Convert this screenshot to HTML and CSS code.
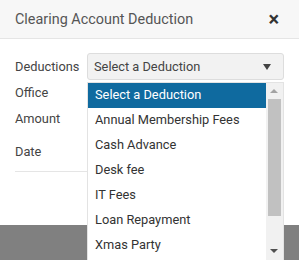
FILE: index.html
```html
<!DOCTYPE html>
<html lang="en">
<head>
    <meta charset="UTF-8">
    <title>Clearing Account Deduction</title>
    <link rel="stylesheet" href="styles.css">
</head>
<body>
<div class="modal">
    <div class="modal-header">
        <span class="modal-title">Clearing Account Deduction</span>
        <span class="close">&times;</span>
    </div>
    <div class="modal-body">
        <div class="row row-deduction">
            <label class="label">Deductions</label>
            <div class="select-wrap">
                <div class="select">
                    <span>Select a Deduction</span>
                    <span class="caret"></span>
                </div>
                <div class="dropdown">
                    <ul class="options">
                        <li class="active">Select a Deduction</li>
                        <li>Annual Membership Fees</li>
                        <li>Cash Advance</li>
                        <li>Desk fee</li>
                        <li>IT Fees</li>
                        <li>Loan Repayment</li>
                        <li>Xmas Party</li>
                    </ul>
                    <div class="scrollbar">
                        <span class="arrow-up"></span>
                        <span class="thumb"></span>
                        <span class="arrow-down"></span>
                    </div>
                </div>
            </div>
        </div>
        <div class="row row-office"><label class="label">Office</label></div>
        <div class="row row-amount"><label class="label">Amount</label></div>
        <div class="row row-date"><label class="label">Date</label></div>
        <hr class="divider">
    </div>
    <div class="modal-footer"></div>
</div>
</body>
</html>
```
FILE: styles.css
```css
body {
    margin: 0;
    font-family: Roboto, "Liberation Sans", sans-serif;
    background: #fff;
    color: #333;
}

.modal {
    width: 299px;
    height: 260px;
    overflow: hidden;
    position: relative;
}

.modal-header {
    height: 39px;
    background: #f7f7f7;
    border-bottom: 1px solid #e5e5e5;
    display: flex;
    align-items: center;
    justify-content: space-between;
    padding: 0 20px 0 15px;
    box-sizing: border-box;
}

.modal-title {
    font-size: 14.4px;
    color: #555;
}

.close {
    font-size: 20px;
    font-weight: bold;
    color: #333;
}

.modal-body {
    padding: 14px 15px 0 15px;
    height: 172px;
    box-sizing: border-box;
    font-size: 12.8px;
}

.row {
    display: flex;
    align-items: center;
}

.label {
    width: 72px;
    color: #444;
}

.row-deduction {
    height: 27px;
}

.row-office {
    height: 25px;
}

.row-amount {
    height: 26px;
}

.row-date {
    height: 40px;
}

.select-wrap {
    position: relative;
    flex: 1;
}

.select {
    height: 27px;
    box-sizing: border-box;
    background: #f2f2f2;
    border: 1px solid #ddd;
    border-radius: 3px;
    display: flex;
    align-items: center;
    justify-content: space-between;
    padding: 0 12px 0 6px;
    color: #444;
}

.caret {
    width: 0;
    height: 0;
    border-left: 4px solid transparent;
    border-right: 4px solid transparent;
    border-top: 6px solid #444;
}

.dropdown {
    position: absolute;
    top: 29px;
    left: 0;
    width: 197px;
    height: 200px;
    background: #fff;
    border: 1px solid #e3e3e3;
    box-sizing: border-box;
    display: flex;
    z-index: 2;
}

.options {
    list-style: none;
    margin: 0;
    padding: 0;
    flex: 1;
}

.options li {
    height: 25px;
    line-height: 24px;
    padding-left: 7px;
    color: #333;
}

.options li.active {
    background: #0f6a9f;
    color: #fff;
}

.scrollbar {
    width: 17px;
    background: #f1f1f1;
    position: relative;
}

.thumb {
    position: absolute;
    left: 2px;
    top: 16px;
    width: 13px;
    height: 117px;
    background: #c1c1c1;
}

.arrow-up {
    position: absolute;
    left: 4px;
    top: 6px;
    border-left: 4px solid transparent;
    border-right: 4px solid transparent;
    border-bottom: 4px solid #a3a3a3;
}

.arrow-down {
    position: absolute;
    left: 4px;
    top: 166px;
    border-left: 4px solid transparent;
    border-right: 4px solid transparent;
    border-top: 4px solid #505050;
}

.divider {
    border: 0;
    border-top: 1px solid #e5e5e5;
    margin: 0;
}

.modal-footer {
    height: 60px;
    margin-top: 14px;
    background: #808080;
}
```
